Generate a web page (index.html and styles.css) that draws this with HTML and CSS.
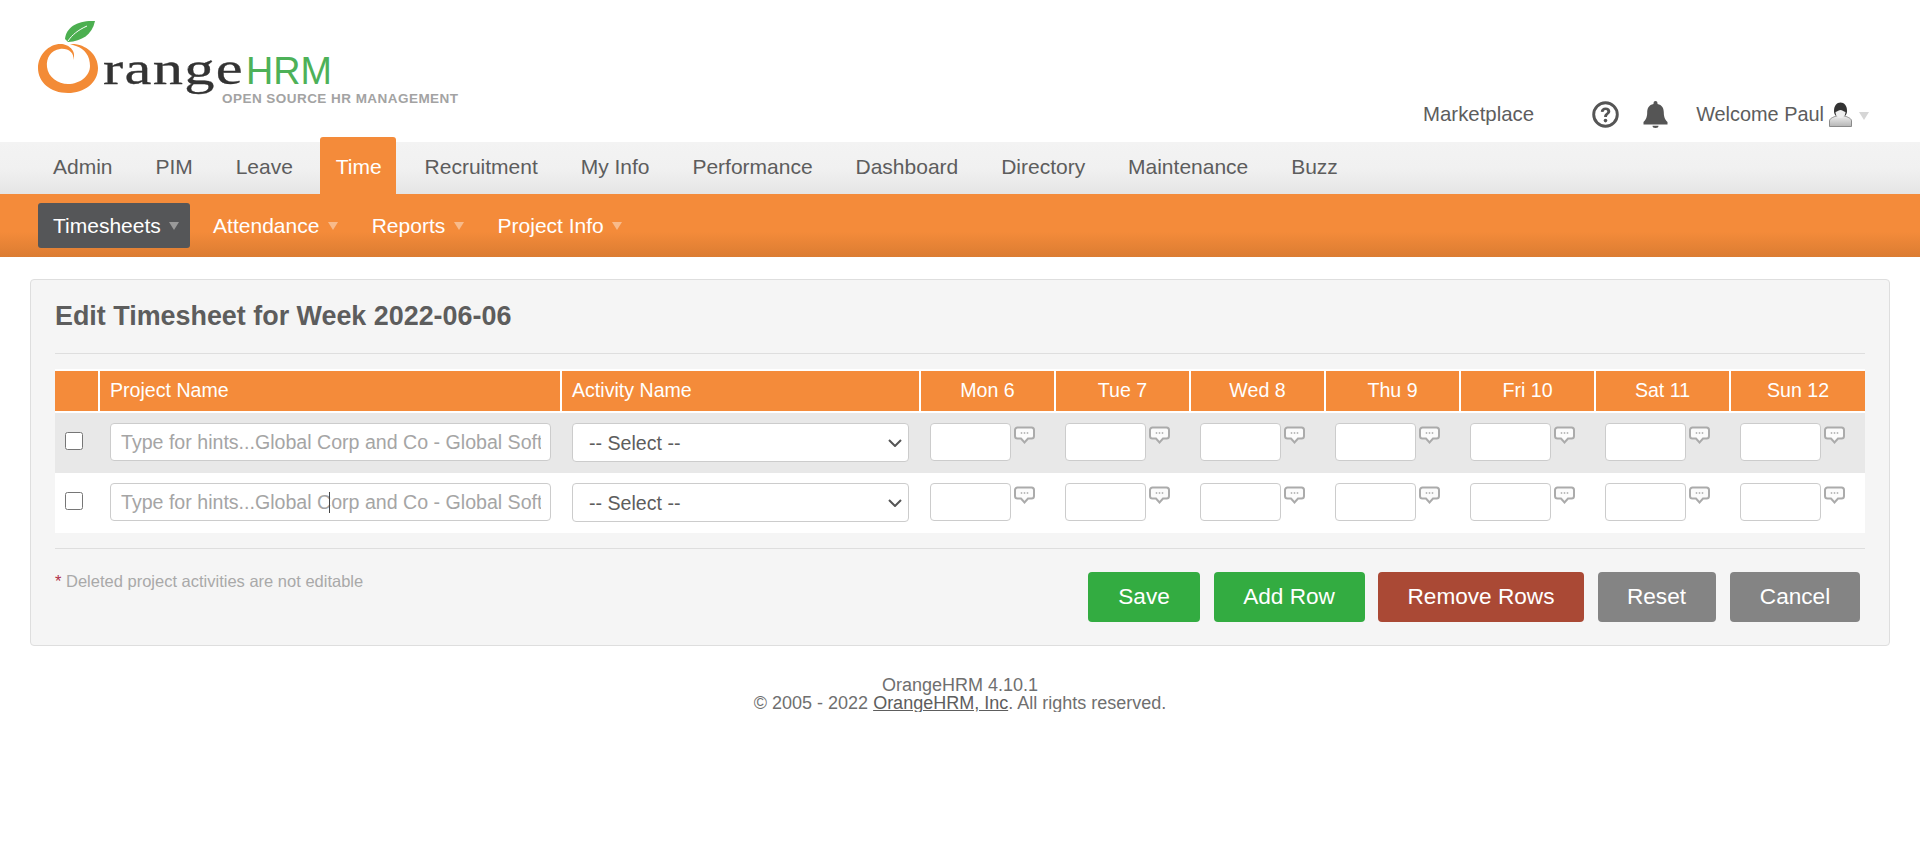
FILE: index.html
```html
<!DOCTYPE html>
<html lang="en">
<head>
    <meta charset="UTF-8">
    <title>OrangeHRM</title>
    <link rel="stylesheet" href="styles.css">
</head>
<body>
    <svg class="defs" width="0" height="0">
        <symbol id="comment" viewBox="0 0 21 18">
            <path d="M3.500 1.500h14a2.500 2.500 0 0 1 2.500 2.500v6a2.500 2.500 0 0 1-2.500 2.500h-3.500l-3.500 4-3.500-4H3.500A2.500 2.500 0 0 1 1 10V4a2.500 2.500 0 0 1 2.500-2.500z" fill="#fbfbfb" stroke="#ababab" stroke-width="2"/>
            <circle cx="7.500" cy="7" r=".9" fill="#b5b5b5"/>
            <circle cx="10.500" cy="7" r=".9" fill="#b5b5b5"/>
            <circle cx="13.500" cy="7" r=".9" fill="#b5b5b5"/>
        </symbol>
        <symbol id="chevron" viewBox="0 0 14 8">
            <path d="M1 1l6 6 6-6" fill="none" stroke="#555555" stroke-width="2"/>
        </symbol>
        <linearGradient id="shoulders" x1="0" y1="0" x2="0" y2="1">
            <stop offset="0" stop-color="#eeeeee"/>
            <stop offset="1" stop-color="#b5b5b5"/>
        </linearGradient>
    </svg>

    <header class="top">
        <svg class="logo" width="480" height="142" viewBox="0 0 480 142">
            <path d="M73 60C75 53 68 48 60 49C51 50 46 58 47 67C48 77 58 84 68 84C80 84 90 76 90 66C90 56 85 49 76 46L70 44C85 43 98 54 98 68C98 83 84 93 68 93C50 93 38 82 38 68C38 54 50 43 62 44C70 45 77 52 73 60Z" fill="#f38b36"/>
            <path d="M95 21C78 20 66 27 65 39L68 42C82 41 92 35 95 21Z" fill="#4caf50"/>
            <path d="M68 41C72 35 78 30 87 26" fill="none" stroke="#ffffff" stroke-width="1"/>
            <text class="logo-range" x="103" y="84" textLength="141" lengthAdjust="spacingAndGlyphs">range</text>
            <text class="logo-hrm" x="246" y="84" textLength="86" lengthAdjust="spacingAndGlyphs">HRM</text>
            <text class="logo-tag" x="222" y="103" textLength="236">OPEN SOURCE HR MANAGEMENT</text>
        </svg>
        <div class="top-links">
            <a class="top-link marketplace">Marketplace</a>
            <svg class="icon-help" width="27" height="27" viewBox="0 0 27 27">
                <circle cx="13.500" cy="13.500" r="11.800" fill="none" stroke="#555555" stroke-width="2.900"/>
                <path d="M8.800 10.800c0-2.800 2-4.400 4.800-4.400s4.700 1.600 4.700 3.900c0 3.100-3.300 3.200-3.300 5.700h-2.900c0-3.700 3.200-3.700 3.200-5.500 0-.9-.7-1.500-1.800-1.500s-1.800.7-1.900 1.900z" fill="#555555"/>
                <circle cx="13.500" cy="19.600" r="1.800" fill="#555555"/>
            </svg>
            <svg class="icon-bell" width="25" height="27" viewBox="0 0 25 27">
                <path d="M12.500 0a2 2 0 0 1 2 2v1c4.500.9 6.300 4 6.300 8.500 0 5 1.700 7.500 3.700 9.500v2.500H.5V21c2-2 3.700-4.500 3.700-9.500 0-4.500 1.800-7.600 6.300-8.500V2a2 2 0 0 1 2-2z" fill="#555555"/>
                <path d="M9.500 24.800h6a3 2.200 0 0 1-6 0z" fill="#555555"/>
            </svg>
            <a class="top-link welcome">Welcome Paul</a>
            <svg class="icon-user" width="23" height="25" viewBox="0 0 23 25">
                <path d="M.5 24.500V19c0-2.500 3-3.500 6.500-5h9c3.500 1.500 6.500 2.500 6.500 5v5.500z" fill="url(#shoulders)" stroke="#8a8a8a"/>
                <path d="M5 9c0-5.500 2.800-8.500 6.500-8.500S18 3.500 18 9c0 2-.8 3.500-1.500 4.500h-10C5.800 12.500 5 11 5 9z" fill="#333333"/>
                <path d="M6.500 10c2-.5 3.500-2 5-2s3 1.500 5 2c0 3-2 6-5 6s-5-3-5-6z" fill="#efefef"/>
            </svg>
            <span class="arrow arrow-top"></span>
        </div>
    </header>

    <nav class="main-nav">
        <a class="nav-item">Admin</a>
        <a class="nav-item">PIM</a>
        <a class="nav-item">Leave</a>
        <a class="nav-item active">Time</a>
        <a class="nav-item">Recruitment</a>
        <a class="nav-item">My Info</a>
        <a class="nav-item">Performance</a>
        <a class="nav-item">Dashboard</a>
        <a class="nav-item">Directory</a>
        <a class="nav-item">Maintenance</a>
        <a class="nav-item">Buzz</a>
    </nav>

    <nav class="sub-nav">
        <a class="sub-item current">Timesheets <span class="arrow"></span></a>
        <a class="sub-item">Attendance <span class="arrow"></span></a>
        <a class="sub-item">Reports <span class="arrow"></span></a>
        <a class="sub-item">Project Info <span class="arrow"></span></a>
    </nav>

    <main class="panel">
        <h1>Edit Timesheet for Week 2022-06-06</h1>
        <table class="sheet">
            <colgroup>
                <col class="col-check">
                <col class="col-project">
                <col class="col-activity">
                <col class="col-day"><col class="col-day"><col class="col-day">
                <col class="col-day"><col class="col-day"><col class="col-day">
                <col>
            </colgroup>
            <thead>
                <tr>
                    <th></th>
                    <th class="left">Project Name</th>
                    <th class="left">Activity Name</th>
                    <th>Mon 6</th>
                    <th>Tue 7</th>
                    <th>Wed 8</th>
                    <th>Thu 9</th>
                    <th>Fri 10</th>
                    <th>Sat 11</th>
                    <th>Sun 12</th>
                </tr>
            </thead>
            <tbody>
                <tr class="odd">
                    <td class="check-cell"><input type="checkbox"></td>
                    <td><input class="field project" type="text" placeholder="Type for hints...Global Corp and Co - Global Soft"></td>
                    <td>
                        <div class="select-wrap">
                            <select class="field activity"><option>-- Select --</option></select>
                            <svg class="chevron" width="14" height="8"><use href="#chevron"/></svg>
                        </div>
                    </td>
                    <td class="day-cell"><div class="day"><input class="field hours" type="text"><svg class="bubble" width="21" height="18"><use href="#comment"/></svg></div></td>
                    <td class="day-cell"><div class="day"><input class="field hours" type="text"><svg class="bubble" width="21" height="18"><use href="#comment"/></svg></div></td>
                    <td class="day-cell"><div class="day"><input class="field hours" type="text"><svg class="bubble" width="21" height="18"><use href="#comment"/></svg></div></td>
                    <td class="day-cell"><div class="day"><input class="field hours" type="text"><svg class="bubble" width="21" height="18"><use href="#comment"/></svg></div></td>
                    <td class="day-cell"><div class="day"><input class="field hours" type="text"><svg class="bubble" width="21" height="18"><use href="#comment"/></svg></div></td>
                    <td class="day-cell"><div class="day"><input class="field hours" type="text"><svg class="bubble" width="21" height="18"><use href="#comment"/></svg></div></td>
                    <td class="day-cell"><div class="day"><input class="field hours" type="text"><svg class="bubble" width="21" height="18"><use href="#comment"/></svg></div></td>
                </tr>
                <tr>
                    <td class="check-cell"><input type="checkbox"></td>
                    <td>
                        <div class="project-wrap">
                            <input class="field project" type="text" placeholder="Type for hints...Global Corp and Co - Global Soft">
                            <span class="ibeam"></span>
                        </div>
                    </td>
                    <td>
                        <div class="select-wrap">
                            <select class="field activity"><option>-- Select --</option></select>
                            <svg class="chevron" width="14" height="8"><use href="#chevron"/></svg>
                        </div>
                    </td>
                    <td class="day-cell"><div class="day"><input class="field hours" type="text"><svg class="bubble" width="21" height="18"><use href="#comment"/></svg></div></td>
                    <td class="day-cell"><div class="day"><input class="field hours" type="text"><svg class="bubble" width="21" height="18"><use href="#comment"/></svg></div></td>
                    <td class="day-cell"><div class="day"><input class="field hours" type="text"><svg class="bubble" width="21" height="18"><use href="#comment"/></svg></div></td>
                    <td class="day-cell"><div class="day"><input class="field hours" type="text"><svg class="bubble" width="21" height="18"><use href="#comment"/></svg></div></td>
                    <td class="day-cell"><div class="day"><input class="field hours" type="text"><svg class="bubble" width="21" height="18"><use href="#comment"/></svg></div></td>
                    <td class="day-cell"><div class="day"><input class="field hours" type="text"><svg class="bubble" width="21" height="18"><use href="#comment"/></svg></div></td>
                    <td class="day-cell"><div class="day"><input class="field hours" type="text"><svg class="bubble" width="21" height="18"><use href="#comment"/></svg></div></td>
                </tr>
            </tbody>
        </table>
        <div class="panel-foot">
            <p class="note"><span class="star">*</span> Deleted project activities are not editable</p>
            <div class="actions">
                <button class="btn green save">Save</button>
                <button class="btn green add">Add Row</button>
                <button class="btn red remove">Remove Rows</button>
                <button class="btn grey reset">Reset</button>
                <button class="btn grey cancel">Cancel</button>
            </div>
        </div>
    </main>

    <footer class="page-foot">
        OrangeHRM 4.10.1<br>
        &copy; 2005 - 2022 <a>OrangeHRM, Inc</a>. All rights reserved.
    </footer>
</body>
</html>
```

FILE: styles.css
```css
* {
    box-sizing: border-box;
}

body {
    margin: 0;
    background: #ffffff;
    color: #5d5d5d;
    font-family: "Liberation Sans", Arial, sans-serif;
}

.defs {
    position: absolute;
}

/* Header */
.top {
    display: flex;
    justify-content: space-between;
    height: 142px;
}

.logo {
    display: block;
}

.logo-range {
    font-family: "Liberation Serif", serif;
    font-size: 46px;
    letter-spacing: 1px;
    fill: #333333;
    stroke: #333333;
    stroke-width: .3px;
}

.logo-hrm {
    font-family: "Liberation Sans", sans-serif;
    font-size: 39px;
    fill: #4db158;
}

.logo-tag {
    font-family: "Liberation Sans", sans-serif;
    font-size: 13.500px;
    font-weight: bold;
    fill: #a3a3a3;
}

.top-links {
    display: flex;
    align-items: center;
    height: 28px;
    margin-top: 100px;
    margin-right: 51px;
}

.top-link {
    font-size: 20.400px;
    color: #5d5d5d;
}

.icon-help {
    margin-left: 58px;
}

.icon-bell {
    margin-left: 24px;
}

.welcome {
    margin-left: 28px;
    font-size: 19.900px;
}

.icon-user {
    margin-left: 5px;
}

.arrow {
    display: inline-block;
    width: 0;
    height: 0;
    margin-left: 2.500px;
    vertical-align: 3px;
    border-left: 5px solid transparent;
    border-right: 5px solid transparent;
    border-top: 8px solid #f8bb8b;
}

.arrow-top {
    margin-left: 7px;
    margin-top: 4px;
    border-top-color: #d6d6d6;
}

/* Main menu */
.main-nav {
    display: flex;
    height: 52px;
    padding-left: 38px;
    background: linear-gradient(#f3f3f3, #f1f1f1 50%, #e5e5e5);
}

.nav-item {
    height: 52px;
    margin-right: 12.900px;
    padding: 0 15px;
    font-size: 21px;
    line-height: 50px;
    color: #5d5d5d;
}

.nav-item.active {
    height: 57px;
    margin-top: -5px;
    margin-left: -1px;
    margin-right: 13.900px;
    padding: 0 14px 0 16px;
    border-radius: 3px 3px 0 0;
    background: #f48b3a;
    line-height: 60px;
    color: #ffffff;
}

/* Sub menu */
.sub-nav {
    display: flex;
    align-items: flex-start;
    height: 63px;
    padding: 9px 0 0 38px;
    background: linear-gradient(#f48b3a, #f48b3a 60%, #db7c32);
}

.sub-item {
    height: 45px;
    margin-right: 8px;
    padding: 0 11px 0 15px;
    border-radius: 3px;
    font-size: 21px;
    line-height: 46px;
    color: #ffffff;
}

.sub-item.current {
    background: #555658;
}

.sub-item.current .arrow {
    border-top-color: #9a9a9a;
}

/* Panel */
.panel {
    width: 1860px;
    height: 367px;
    margin: 22px 0 0 30px;
    padding: 0 24px;
    border: 1px solid #dedede;
    border-radius: 4px;
    background: #f5f5f5;
}

h1 {
    height: 74px;
    margin: 0 0 15px;
    border-bottom: 1px solid #dedede;
    font-size: 26.900px;
    line-height: 72px;
    font-weight: bold;
    color: #5d5d5d;
}

.sheet {
    width: 1810px;
    table-layout: fixed;
    border-collapse: separate;
    border-spacing: 0;
    background: #ffffff;
}

.col-check {
    width: 45px;
}

.col-project {
    width: 462px;
}

.col-activity {
    width: 359px;
}

.col-day {
    width: 135px;
}

.sheet th {
    height: 44px;
    padding: 0 0 2px;
    border-top: 2px solid #ffffff;
    border-bottom: 2px solid #ffffff;
    border-right: 2px solid #ffffff;
    background: #f48b3a;
    font-size: 19.600px;
    font-weight: normal;
    color: #ffffff;
}

.sheet th:last-child {
    border-right: 0;
}

.sheet th.left {
    padding-left: 10px;
    text-align: left;
}

.sheet td {
    height: 60px;
    padding: 10px 10px 0;
    vertical-align: top;
}

.sheet tr.odd td {
    background: #e8e8e8;
}

.sheet td.check-cell {
    padding: 19px 0 0 10px;
}

.check-cell input {
    display: block;
    width: 18px;
    height: 18px;
    margin: 0;
}

.field {
    height: 38px;
    border: 1px solid #cccccc;
    border-radius: 4px;
    background: #ffffff;
    font-family: "Liberation Sans", Arial, sans-serif;
    font-size: 19.600px;
    color: #5d5d5d;
}

.project {
    display: block;
    width: 441px;
    padding: 0 9px 0 10px;
}

.project::placeholder {
    color: #a5a5a5;
    opacity: 1;
}

.project-wrap,
.select-wrap {
    position: relative;
}

.ibeam {
    position: absolute;
    left: 219px;
    top: 9px;
    width: 1px;
    height: 21px;
    background: #444444;
}

.activity {
    display: block;
    width: 337px;
    height: 39px;
    padding: 0 16px;
    appearance: none;
}

.chevron {
    position: absolute;
    right: 9px;
    top: 16px;
}

.sheet td.day-cell {
    padding: 10px 0 0 9px;
}

.day {
    display: flex;
    gap: 3px;
    align-items: flex-start;
}

.hours {
    width: 81px;
}

.bubble {
    margin-top: 3px;
}

/* Panel footer */
.panel-foot {
    display: flex;
    justify-content: space-between;
    margin-top: 15px;
    padding-top: 23px;
    border-top: 1px solid #dedede;
}

.note {
    margin: -1px 0 0;
    font-size: 16.500px;
    line-height: 20px;
    color: #a9a9a9;
}

.star {
    color: #b0324a;
}

.actions {
    display: flex;
    gap: 13.500px;
    margin-right: 5px;
}

.btn {
    height: 50px;
    padding: 0;
    border: 0;
    border-radius: 4px;
    font-family: "Liberation Sans", Arial, sans-serif;
    font-size: 22.600px;
    color: #ffffff;
}

.green {
    background: #33ac41;
}

.red {
    background: #aa4935;
}

.grey {
    background: #848484;
}

.save {
    width: 112px;
}

.add {
    width: 151px;
}

.remove {
    width: 206px;
}

.reset {
    width: 118px;
    margin-right: 1px;
}

.cancel {
    width: 130px;
}

/* Page footer */
.page-foot {
    margin-top: 30px;
    font-size: 18px;
    line-height: 18px;
    text-align: center;
    color: #6f6f6f;
}

.page-foot a {
    text-decoration: underline;
    color: #5d5d5d;
}
```
